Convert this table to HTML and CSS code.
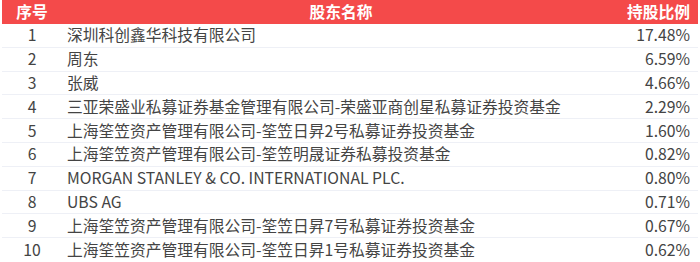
FILE: index.html
```html
<!DOCTYPE html>
<html lang="zh-CN">
<head>
  <meta charset="UTF-8" />
  <meta name="viewport" content="width=device-width, initial-scale=1.0"/>
  <title>十大股东</title>
  <link rel="stylesheet" href="styles.css">
</head>
<body>
  <table class="holders">
    <thead>
      <tr>
        <th class="col-no">序号</th>
        <th class="col-name">股东名称</th>
        <th class="col-ratio">持股比例</th>
      </tr>
    </thead>
    <tbody>
      <tr><td class="col-no">1</td><td class="col-name">深圳科创鑫华科技有限公司</td><td class="col-ratio">17.48%</td></tr>
      <tr><td class="col-no">2</td><td class="col-name">周东</td><td class="col-ratio">6.59%</td></tr>
      <tr><td class="col-no">3</td><td class="col-name">张威</td><td class="col-ratio">4.66%</td></tr>
      <tr><td class="col-no">4</td><td class="col-name">三亚荣盛业私募证券基金管理有限公司-荣盛亚商创星私募证券投资基金</td><td class="col-ratio">2.29%</td></tr>
      <tr><td class="col-no">5</td><td class="col-name">上海筌笠资产管理有限公司-筌笠日昇2号私募证券投资基金</td><td class="col-ratio">1.60%</td></tr>
      <tr><td class="col-no">6</td><td class="col-name">上海筌笠资产管理有限公司-筌笠明晟证券私募投资基金</td><td class="col-ratio">0.82%</td></tr>
      <tr><td class="col-no">7</td><td class="col-name">MORGAN STANLEY &amp; CO. INTERNATIONAL PLC.</td><td class="col-ratio">0.80%</td></tr>
      <tr><td class="col-no">8</td><td class="col-name">UBS AG</td><td class="col-ratio">0.71%</td></tr>
      <tr><td class="col-no">9</td><td class="col-name">上海筌笠资产管理有限公司-筌笠日昇7号私募证券投资基金</td><td class="col-ratio">0.67%</td></tr>
      <tr><td class="col-no">10</td><td class="col-name">上海筌笠资产管理有限公司-筌笠日昇1号私募证券投资基金</td><td class="col-ratio">0.62%</td></tr>
    </tbody>
  </table>
</body>
</html>
```

FILE: styles.css
```css
body {
  margin: 0;
  padding: 0 2px;
  background: #ffffff;
  font-family: "Noto Sans CJK SC", "Noto Sans", sans-serif;
  font-size: 15.75px;
  color: #444;
}

.holders {
  width: 100%;
  border-collapse: collapse;
  table-layout: fixed;
}

.holders th {
  background-color: #f44a4a;
  color: #fff;
  font-weight: bold;
  height: 24px;
  padding: 0;
  line-height: 24px;
}

.holders td {
  height: 22.8px;
  padding: 0;
  line-height: 22px;
  border-bottom: 1px solid #eef0f6;
}

.holders tbody tr:last-child td {
  border-bottom: none;
}

.col-no {
  width: 60px;
  text-align: center;
}

.holders .col-name {
  text-align: left;
  padding-left: 5px;
  white-space: nowrap;
}

.holders th.col-name {
  text-align: center;
  padding-left: 0;
}

.holders .col-ratio {
  width: 70px;
  text-align: right;
  padding-right: 8px;
}
```
